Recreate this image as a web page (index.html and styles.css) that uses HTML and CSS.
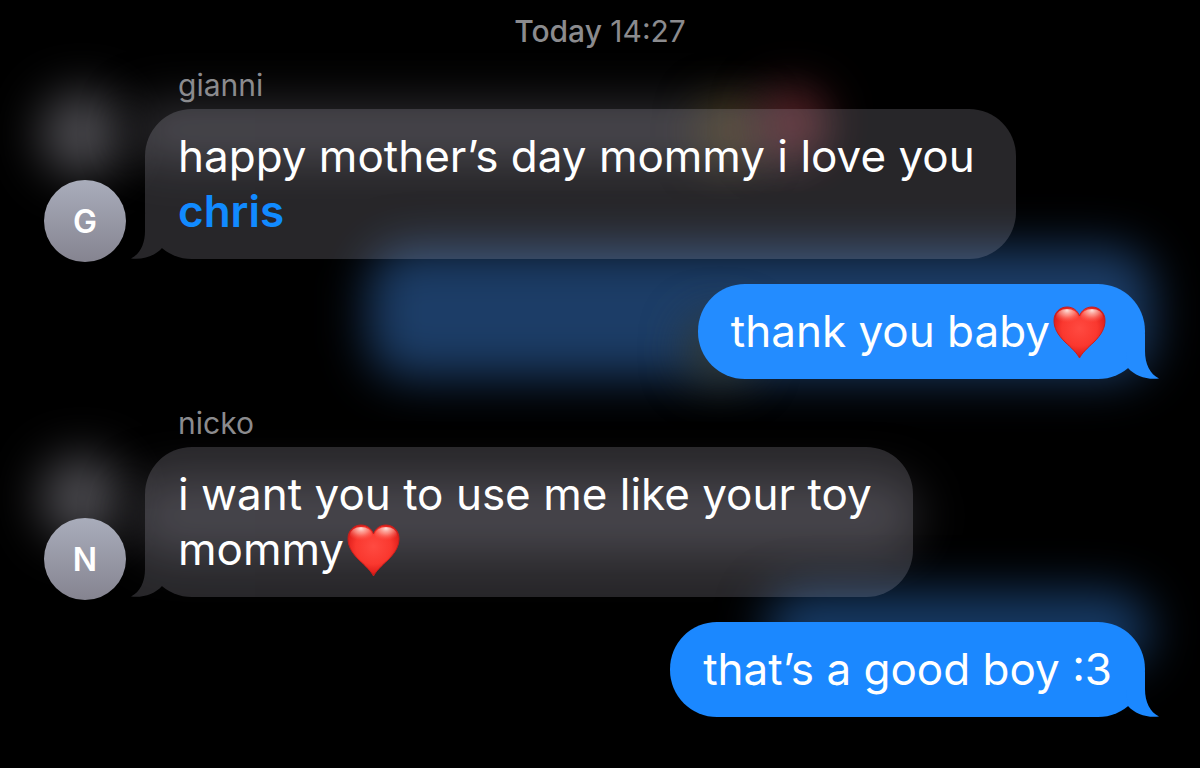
FILE: index.html
```html
<!DOCTYPE html>
<html lang="en">
<head>
<meta charset="utf-8">
<meta name="viewport" content="width=device-width, initial-scale=1">
<title>Messages</title>
<link rel="stylesheet" href="styles.css">
</head>
<body>
<svg class="defs" width="0" height="0" aria-hidden="true">
  <defs>
    <radialGradient id="heart-fill" cx="50%" cy="42%" r="58%">
      <stop offset="0" stop-color="#ff4a41"/>
      <stop offset="0.6" stop-color="#fa382f"/>
      <stop offset="0.88" stop-color="#e2201c"/>
      <stop offset="1" stop-color="#b81414"/>
    </radialGradient>
    <radialGradient id="heart-shine" cx="50%" cy="10%" r="75%">
      <stop offset="0" stop-color="#ffe9e2" stop-opacity="0.95"/>
      <stop offset="0.45" stop-color="#ffb3a6" stop-opacity="0.6"/>
      <stop offset="1" stop-color="#ff5a4e" stop-opacity="0"/>
    </radialGradient>
    <symbol id="heart" viewBox="0 0 53 53">
      <path d="M26.500 52C24 47 18 41.500 12 36C4.500 28.500 1 22 1 14.500C1 6.500 7 1 14 1C20 1 24.500 4.500 26.500 10C28.500 4.500 33 1 39 1C46 1 52 6.500 52 14.500C52 22 48.500 28.500 41 36C35 41.500 29 47 26.500 52Z" fill="url(#heart-fill)" stroke="#c91f1c" stroke-width="1"/>
      <ellipse cx="14" cy="11" rx="11" ry="8" fill="url(#heart-shine)"/>
      <ellipse cx="39" cy="11" rx="11" ry="8" fill="url(#heart-shine)"/>
    </symbol>
    <symbol id="tail" viewBox="0 0 34 46">
      <path d="M15 0V18C15 31 10 41 1 45.500C13 47 25 43 32 35L34 20Z"/>
    </symbol>
  </defs>
</svg>

<main class="chat">
  <div class="ambient" aria-hidden="true">
    <span class="glow glow-avatar-a"></span>
    <span class="glow glow-gray-a"></span>
    <span class="glow glow-yellow"></span>
    <span class="glow glow-red"></span>
    <span class="glow glow-blue-a"></span>
    <span class="glow glow-olive"></span>
    <span class="glow glow-avatar-b"></span>
    <span class="glow glow-gray-b"></span>
    <span class="glow glow-blue-b"></span>
  </div>

  <p class="timestamp"><strong>Today</strong> <time>14:27</time></p>

  <section class="message received">
    <div class="avatar" aria-hidden="true">G</div>
    <div class="content">
      <h2 class="sender">gianni</h2>
      <div class="bubble">
        <div class="shape"><svg class="tail" aria-hidden="true"><use href="#tail"/></svg></div>
        <p class="text">happy mother’s day mommy i love you<br><a class="mention" href="#chris">chris</a></p>
      </div>
    </div>
  </section>

  <section class="message sent">
    <div class="bubble">
      <div class="shape"><svg class="tail" aria-hidden="true"><use href="#tail"/></svg></div>
      <p class="text">thank you baby<svg class="heart" role="img" aria-label="red heart"><use href="#heart"/></svg></p>
    </div>
  </section>

  <section class="message received">
    <div class="avatar" aria-hidden="true">N</div>
    <div class="content">
      <h2 class="sender">nicko</h2>
      <div class="bubble">
        <div class="shape"><svg class="tail" aria-hidden="true"><use href="#tail"/></svg></div>
        <p class="text">i want you to use me like your toy<br>mommy<svg class="heart" role="img" aria-label="red heart"><use href="#heart"/></svg></p>
      </div>
    </div>
  </section>

  <section class="message sent last">
    <div class="bubble">
      <div class="shape"><svg class="tail" aria-hidden="true"><use href="#tail"/></svg></div>
      <p class="text">that’s a good boy :3</p>
    </div>
  </section>
</main>
</body>
</html>
```

FILE: styles.css
```css
* {
  box-sizing: border-box;
}

body {
  margin: 0;
  background: #000;
  color: #fff;
  font-family: Inter, "Liberation Sans", sans-serif;
}

.defs {
  position: absolute;
}

.chat {
  position: relative;
  isolation: isolate;
  overflow: hidden;
  display: flex;
  flex-direction: column;
  gap: 25px;
  min-height: 100vh;
  padding: 12px 55px 51px 44px;
}

/* Soft lights behind the conversation */
.ambient {
  position: absolute;
  inset: 0;
  z-index: -1;
}

.glow {
  position: absolute;
  filter: blur(24px);
  border-radius: 40px;
}

.glow-avatar-a,
.glow-avatar-b {
  left: 40px;
  width: 84px;
  height: 84px;
  background: #4c4b50;
}

.glow-avatar-a { top: 92px; }
.glow-avatar-b { top: 456px; }

.glow-gray-a {
  left: 130px;
  top: 102px;
  width: 680px;
  height: 56px;
  background: #2c2b2f;
}

.glow-yellow {
  left: 705px;
  top: 102px;
  width: 48px;
  height: 60px;
  background: #4c3d16;
}

.glow-red {
  left: 760px;
  top: 90px;
  width: 66px;
  height: 66px;
  background: #5c1e23;
}

.glow-blue-a {
  left: 368px;
  right: 48px;
  top: 248px;
  height: 130px;
  background: #1c3d67;
}

.glow-olive {
  left: 690px;
  top: 320px;
  width: 60px;
  height: 60px;
  background: #3a3a28;
}

.glow-gray-b {
  left: 130px;
  top: 478px;
  width: 790px;
  height: 76px;
  background: #27262a;
}

.glow-blue-b {
  left: 765px;
  right: 50px;
  top: 592px;
  height: 76px;
  background: #173b66;
}

.timestamp {
  margin: 0 0 -9px;
  padding-left: 11px;
  text-align: center;
  font-size: 30px;
  line-height: 38px;
  color: #8b8b8e;
}

.timestamp strong {
  font-weight: 500;
}

.message {
  display: flex;
}

.received {
  align-items: flex-end;
  gap: 19px;
}

.sent {
  justify-content: flex-end;
}

.avatar {
  flex: none;
  display: grid;
  place-items: center;
  width: 82px;
  height: 82px;
  margin-bottom: -3px;
  border-radius: 50%;
  background: linear-gradient(#a9adbb, #858490);
  font-size: 32px;
  font-weight: 600;
}

.sender {
  margin: 0 0 5px 33px;
  font-size: 30px;
  font-weight: 400;
  line-height: 38px;
  color: #8b8b8e;
}

.bubble {
  position: relative;
  width: fit-content;
  padding: 20px 33px;
}

.received .bubble {
  padding-right: 41px;
}

/* Body and tail fade as one group so their overlap stays even */
.shape {
  position: absolute;
  inset: 0;
  border-radius: 47px;
  background: #f0ecff;
  fill: #f0ecff;
  opacity: 0.16;
}

.sent .shape {
  background: #238cff;
  fill: #238cff;
  opacity: 1;
}

.last .shape {
  background: #1b88ff;
  fill: #1b88ff;
}

.tail {
  position: absolute;
  left: -15px;
  bottom: 0;
  width: 34px;
  height: 46px;
}

.sent .tail {
  left: auto;
  right: -15px;
  transform: scaleX(-1);
}

.text {
  position: relative;
  margin: 0;
  font-size: 44px;
  line-height: 55px;
}

.mention {
  color: #118aff;
  font-weight: 600;
  text-decoration: none;
}

.heart {
  width: 53px;
  height: 53px;
  margin: -10px 6px -10px 3px;
  vertical-align: -2px;
}
```
